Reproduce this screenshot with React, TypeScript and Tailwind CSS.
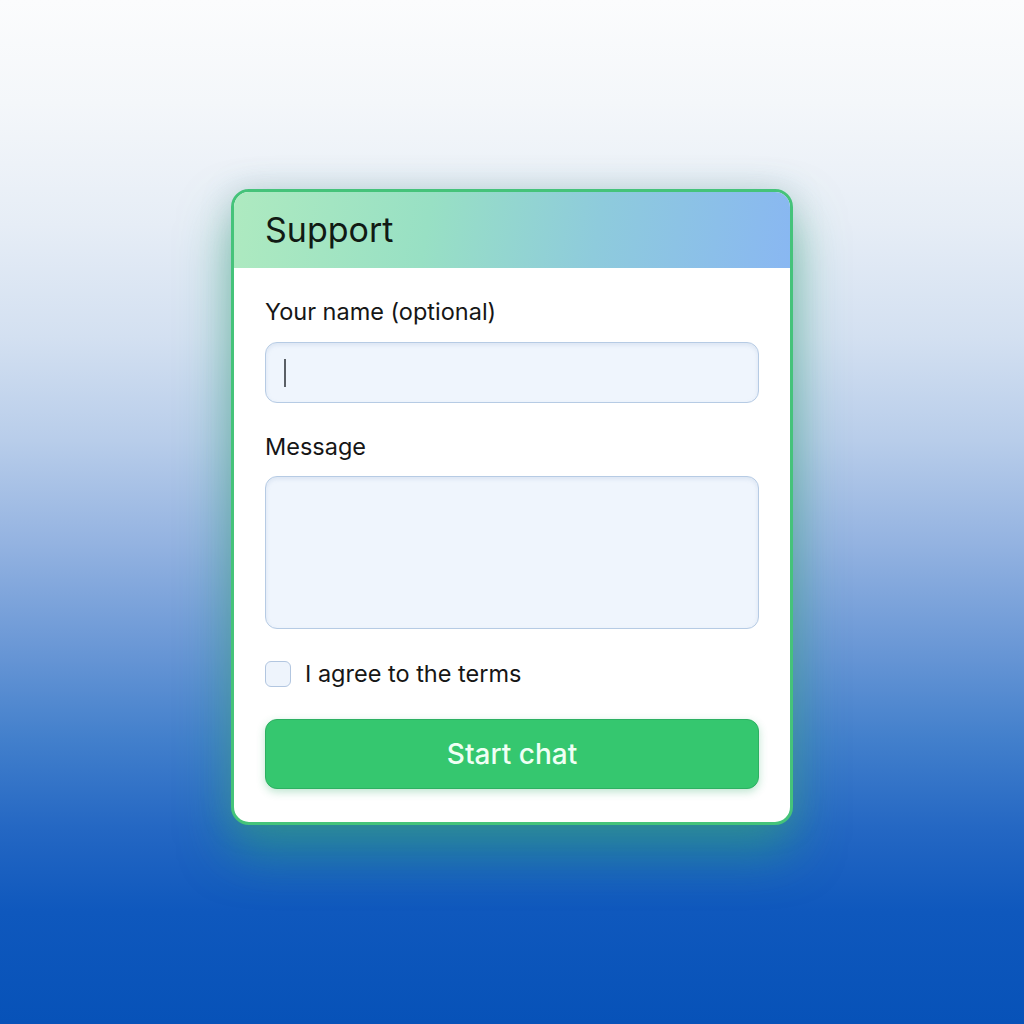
export default function App() {
  return (
    <div
      className="flex h-[1024px] w-full justify-center pt-[189px] bg-[linear-gradient(180deg,#fbfcfd_0%,#f4f7fa_10%,#e6edf6_22%,#d3e0f1_33%,#b8cdea_43%,#94b3e1_53%,#6b98d6_63%,#4380cc_72%,#2467c3_81%,#0f58bd_89%,#0752b8_100%)]"
      style={{ fontFamily: 'Inter, "Noto Sans", sans-serif' }}
    >
      <div className="h-[636px] w-[562px] overflow-hidden rounded-[18px] border-[3px] border-[#45c37a] bg-white shadow-[0_26px_50px_rgba(40,170,110,0.55),0_0_30px_rgba(120,140,170,0.25)]">
        <div className="flex h-[76px] items-center bg-[linear-gradient(100deg,#aeeac0_0%,#98e0c4_35%,#8ecbdc_65%,#89b7f2_100%)] px-[31px]">
          <h1 className="text-[34px] leading-none text-[#111a14]">Support</h1>
        </div>

        <form className="flex flex-col px-[31px] pt-[30px]" onSubmit={(e) => e.preventDefault()}>
          <label className="text-[23.5px] leading-[28px] text-[#161616]">Your name (optional)</label>
          <div className="mt-[16px] flex h-[61px] items-center rounded-xl border-[1.5px] border-[#b6cbe4] bg-[#eff5fd] px-[18px] shadow-[inset_0_2px_4px_rgba(120,150,190,0.18)]">
            <span className="h-[28px] w-[1.5px] bg-[#5a5f66]" />
          </div>

          <label className="mt-[30px] text-[23.5px] leading-[28px] text-[#161616]">Message</label>
          <div className="mt-[15px] h-[153px] rounded-xl border-[1.5px] border-[#b6cbe4] bg-[#eff5fd] shadow-[inset_0_2px_4px_rgba(120,150,190,0.18)]" />

          <div className="mt-[31px] flex items-center gap-[14px]">
            <span className="h-[26px] w-[26px] rounded-md border-[1.5px] border-[#b2c6e0] bg-[#eef4fc]" />
            <span className="text-[23.5px] leading-[28px] text-[#161616]">I agree to the terms</span>
          </div>

          <button
            type="submit"
            className="mt-[31px] flex h-[70px] items-center justify-center rounded-xl border border-[#2db062] bg-[#35c76f] text-[28px] font-medium text-[#effff4] shadow-[0_3px_8px_rgba(40,170,100,0.3)]"
          >
            Start chat
          </button>
        </form>
      </div>
    </div>
  )
}
